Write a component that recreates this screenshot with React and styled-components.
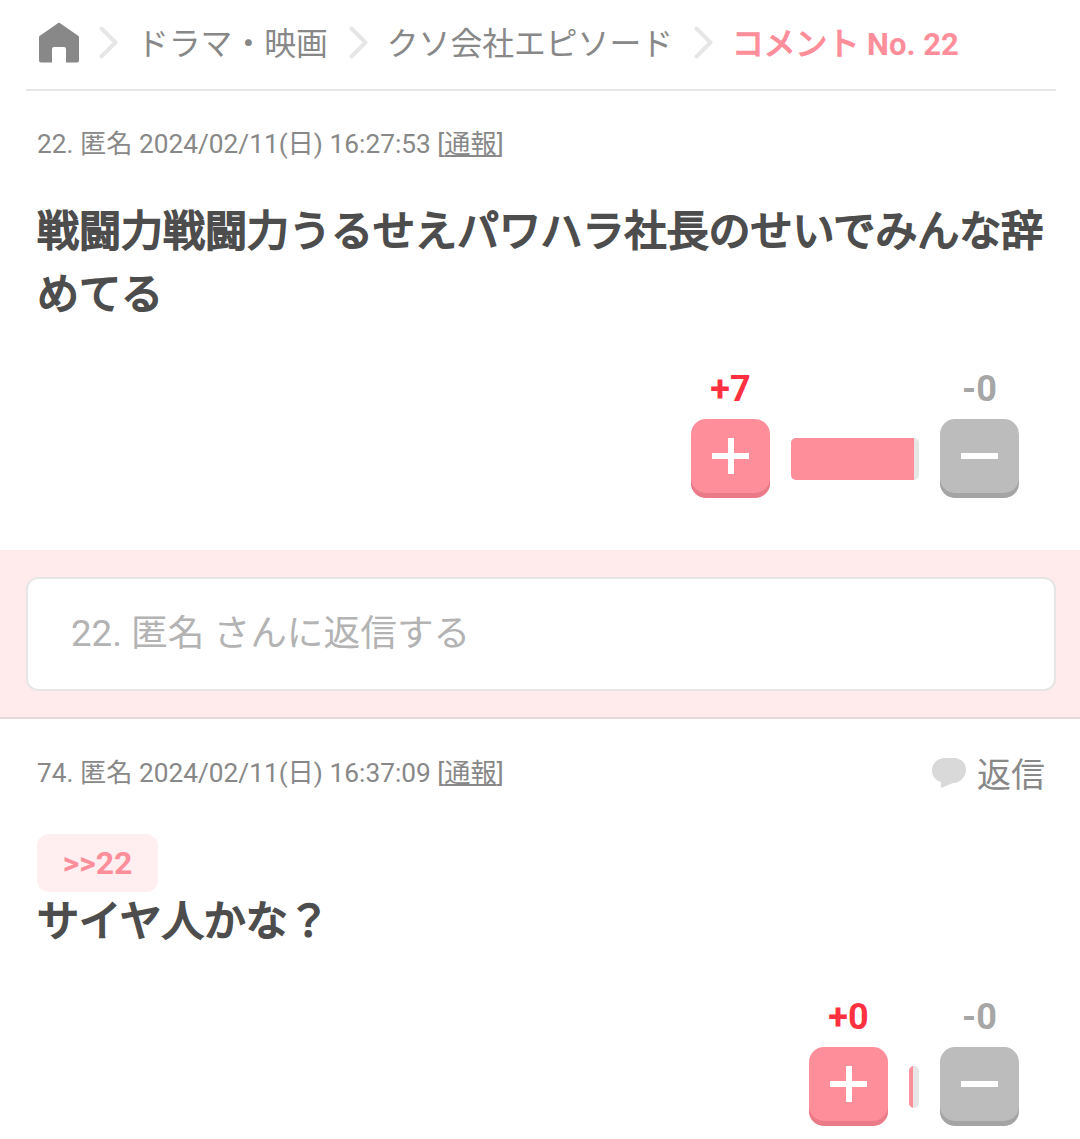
import React from 'react';
import styled, {createGlobalStyle} from 'styled-components';

const GlobalStyle = createGlobalStyle`
    html, body {
        margin: 0;
        padding: 0;
        background: #fff;
    }

    body {
        font-family: Roboto, "Noto Sans CJK JP", sans-serif;
        color: #4d4d4d;
    }

    p {
        margin: 0;
    }
`

const Page = styled.div`
    width: 1080px;
    height: 1139px;
    overflow: hidden;
`

const Breadcrumb = styled.nav`
    display: flex;
    align-items: center;
    height: 91px;
    box-sizing: border-box;
    margin: 0 24px 0 26px;
    padding-left: 13px;
    padding-bottom: 4px;
    border-bottom: 2px solid #e6e6e6;
    font-size: 31.8px;
    color: #888;
    white-space: nowrap;

    svg {
        flex: none;
    }
`

const Crumb = styled.span`
    position: relative;
    top: -2px;
    margin: 0 21px 0 19px;
`

const HomeLink = styled.span`
    display: flex;
    margin-right: 20px;
`

const CurrentCrumb = styled.span`
    position: relative;
    top: -2px;
    margin-left: 19px;
    color: #ff8e9b;
    -webkit-text-stroke: 1.4px #ff8e9b;

    b {
        font-weight: 700;
        font-size: 31px;
        -webkit-text-stroke: 0;
    }
`

const Comment = styled.section`
    padding: 0 35px 0 37px;
`

const MetaRow = styled.div`
    display: flex;
    align-items: center;
    justify-content: space-between;
    height: ${props => props.tall ? '109px' : '107px'};
    font-size: 26.25px;
    color: #888;

    u {
        text-underline-offset: 2px;
    }
`

const MetaText = styled.span`
    margin-bottom: 6px;
`

const ReplyLink = styled.div`
    display: flex;
    align-items: center;
    gap: 11px;
    margin-bottom: 2px;
    font-size: 34px;
    color: #888;
`

// the heading is a thickened regular weight, not the real bold cut
const Body = styled.p`
    margin-top: ${props => props.top || 0}px;
    font-size: 42px;
    line-height: 63px;
    color: #4d4d4d;
    -webkit-text-stroke: 2px #4d4d4d;
`

const Anchor = styled.div`
    display: flex;
    align-items: center;
    justify-content: center;
    width: 121px;
    height: 58px;
    margin-top: 6px;
    border-radius: 12px;
    background: #ffeff0;
    color: #ff8e9b;
    font-size: 32px;
    font-weight: 700;
`

const Votes = styled.div`
    display: grid;
    grid-template-columns: 79px auto 79px;
    column-gap: 21px;
    justify-content: end;
    align-items: center;
    margin-top: ${props => props.top}px;
    padding-right: 26px;
`

const Count = styled.div`
    height: 54px;
    line-height: 48px;
    text-align: center;
    font-size: 36px;
    font-weight: 700;
    color: ${props => props.plus ? '#ff3040' : '#a6a6a6'};
`

const VoteButton = styled.div`
    position: relative;
    width: 79px;
    height: 79px;
    box-sizing: border-box;
    border-radius: 15px;
    background: ${props => props.plus ? '#ff8e9b' : '#bcbcbc'};
    box-shadow: inset 0 -5px 0 ${props => props.plus ? '#ea7a87' : '#a4a4a4'};
`

const Hbar = styled.i`
    position: absolute;
    left: 21px;
    top: 34px;
    width: 37px;
    height: 6px;
    background: #fff;
`

const Vbar = styled.i`
    position: absolute;
    left: 37px;
    top: 19px;
    width: 6px;
    height: 36px;
    background: #fff;
`

const Meter = styled.div`
    width: ${props => props.width}px;
    height: 42px;
    border-radius: 5px;
    overflow: hidden;
    background: #e6e6e6;
`

const MeterFill = styled.div`
    height: 100%;
    background: #ff8e9b;
`

const ReplyBand = styled.div`
    margin-top: 52px;
    padding: 27px 24px 26px 26px;
    background: #ffeaec;
    border-bottom: 2px solid #e6d9da;
`

const ReplyBox = styled.div`
    display: flex;
    align-items: center;
    height: 114px;
    box-sizing: border-box;
    padding: 0 0 9px 43px;
    border: 2px solid #e6e6e6;
    border-radius: 12px;
    background: #fff;
    font-size: 36.7px;
    color: #b3b3b3;
`

function HomeIcon() {
    return (
        <svg width="40" height="41" viewBox="0 0 40 41">
            <path
                fill="#888"
                d="M20 0.5 L39.5 14 Q40 14.5 40 15.5 L40 38.5 Q40 40.5 38 40.5 L27 40.5 L27 27 Q27 25 25 25 L15 25 Q13 25 13 27 L13 40.5 L2 40.5 Q0 40.5 0 38.5 L0 15.5 Q0 14.5 0.5 14 Z"
            />
        </svg>
    )
}

function Chevron() {
    return (
        <svg width="19" height="33" viewBox="0 0 19 33">
            <path d="M2.5 2.5 L16.5 16.5 L2.5 30.5" fill="none" stroke="#e6e6e6" strokeWidth="4" strokeLinecap="round" strokeLinejoin="round" />
        </svg>
    )
}

function BubbleIcon() {
    return (
        <svg width="34" height="30" viewBox="0 0 34 30">
            <path
                fill="#d9d9d9"
                d="M13 0 L22 0 C29 0 34 5 34 11.5 C34 19 28 25 21 25 L9 30 L9 24 C3.5 22.5 0 18 0 12.5 C0 5.5 5.5 0 13 0 Z"
            />
        </svg>
    )
}

function VoteBlock({plus, minus, fill, width, top}) {
    return (
        <Votes top={top}>
            <Count plus>{plus}</Count>
            <span />
            <Count>{minus}</Count>
            <VoteButton plus>
                <Hbar />
                <Vbar />
            </VoteButton>
            <Meter width={width}>
                <MeterFill style={{width: `${fill}%`}} />
            </Meter>
            <VoteButton>
                <Hbar />
            </VoteButton>
        </Votes>
    )
}

export default function App() {
    return (
        <Page>
            <GlobalStyle />
            <Breadcrumb>
                <HomeLink><HomeIcon /></HomeLink>
                <Chevron />
                <Crumb>ドラマ・映画</Crumb>
                <Chevron />
                <Crumb>クソ会社エピソード</Crumb>
                <Chevron />
                <CurrentCrumb>コメント <b>No. 22</b></CurrentCrumb>
            </Breadcrumb>

            <Comment>
                <MetaRow>
                    <MetaText>22. 匿名 2024/02/11(日) 16:27:53 [<u>通報</u>]</MetaText>
                </MetaRow>
                <Body top={2}>戦闘力戦闘力うるせえパワハラ社長のせいでみんな辞めてる</Body>
                <VoteBlock plus="+7" minus="-0" fill={96} width={128} top={39} />
            </Comment>

            <ReplyBand>
                <ReplyBox>22. 匿名 さんに返信する</ReplyBox>
            </ReplyBand>

            <Comment>
                <MetaRow tall>
                    <MetaText>74. 匿名 2024/02/11(日) 16:37:09 [<u>通報</u>]</MetaText>
                    <ReplyLink>
                        <BubbleIcon />
                        <span>返信</span>
                    </ReplyLink>
                </MetaRow>
                <Anchor>&gt;&gt;22</Anchor>
                <Body top={-2}>サイヤ人かな？</Body>
                <VoteBlock plus="+0" minus="-0" fill={40} width={10} top={40} />
            </Comment>
        </Page>
    )
}
